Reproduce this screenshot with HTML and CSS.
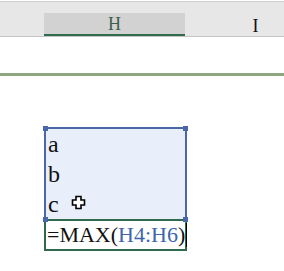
FILE: index.html
```html
<!DOCTYPE html>
<html>
<head>
    <meta charset="utf-8">
    <title>Sheet</title>
    <link rel="stylesheet" href="styles.css">
</head>
<body>
    <div class="col-head">
        <div class="col-gap"></div>
        <div class="col col-on">H</div>
        <div class="col">I</div>
    </div>
    <div class="row-line"></div>
    <div class="sheet">
        <div class="sel">
            <span class="knob k-tl"></span>
            <span class="knob k-tr"></span>
            <span class="knob k-bl"></span>
            <span class="knob k-br"></span>
            <div class="cell">a</div>
            <div class="cell">b</div>
            <div class="cell">c
                <svg class="cross" width="15" height="15" viewBox="0 0 15 15">
                    <path d="M5 1.5h5v3.5h3.5v5H10v3.5H5V10H1.5V5H5z" fill="#fff" stroke="#000" stroke-width="1.6"/>
                </svg>
            </div>
        </div>
        <div class="edit">=MAX(<span class="ref">H4:H6</span>)<span class="caret"></span></div>
    </div>
</body>
</html>
```

FILE: styles.css
```css
* {
    margin: 0;
    padding: 0;
}

body {
    background: #fff;
    font-family: "Liberation Serif", serif;
    color: #111;
    overflow: hidden;
}

.col-head {
    display: flex;
    align-items: flex-end;
    height: 34px;
    margin-top: 1px;
    overflow: hidden;
    border-top: 1px solid #cfcfcf;
    border-bottom: 1px solid #c4c4c4;
    background: #e7e7e7;
}

.col-gap {
    flex-shrink: 0;
    width: 44px;
}

.col {
    flex-shrink: 0;
    width: 141px;
    height: 21px;
    text-align: center;
    font-size: 18px;
    line-height: 22px;
}

.col-on {
    background: #d2d2d2;
    border-bottom: 2px solid #2f6a4c;
    color: #3f5e50;
}

.row-line {
    height: 3px;
    margin-top: 36px;
    background: #8fa67d;
}

.sheet {
    padding: 51px 0 0 44px;
}

.sel {
    position: relative;
    width: 139px;
    border: 2px solid #4a68a8;
    border-bottom: 0;
    background: #e8eefa;
}

.cell {
    position: relative;
    height: 30px;
    padding-left: 2px;
    font-size: 24px;
    line-height: 30px;
}

.cross {
    position: absolute;
    left: 25px;
    top: 6px;
}

.knob {
    position: absolute;
    width: 5px;
    height: 5px;
    background: #4a68a8;
}

.k-tl { left: -3px; top: -3px; }
.k-tr { right: -3px; top: -3px; }
.k-bl { left: -3px; bottom: -3px; }
.k-br { right: -3px; bottom: -3px; }

.edit {
    width: 138px;
    height: 28px;
    border: 2px solid #2f6a4c;
    padding-left: 1px;
    font-size: 22px;
    line-height: 28px;
    white-space: nowrap;
}

.ref {
    color: #3d66ad;
}

.caret {
    display: inline-block;
    width: 1px;
    height: 24px;
    margin-left: 1px;
    vertical-align: -5px;
    background: #000;
}
```
